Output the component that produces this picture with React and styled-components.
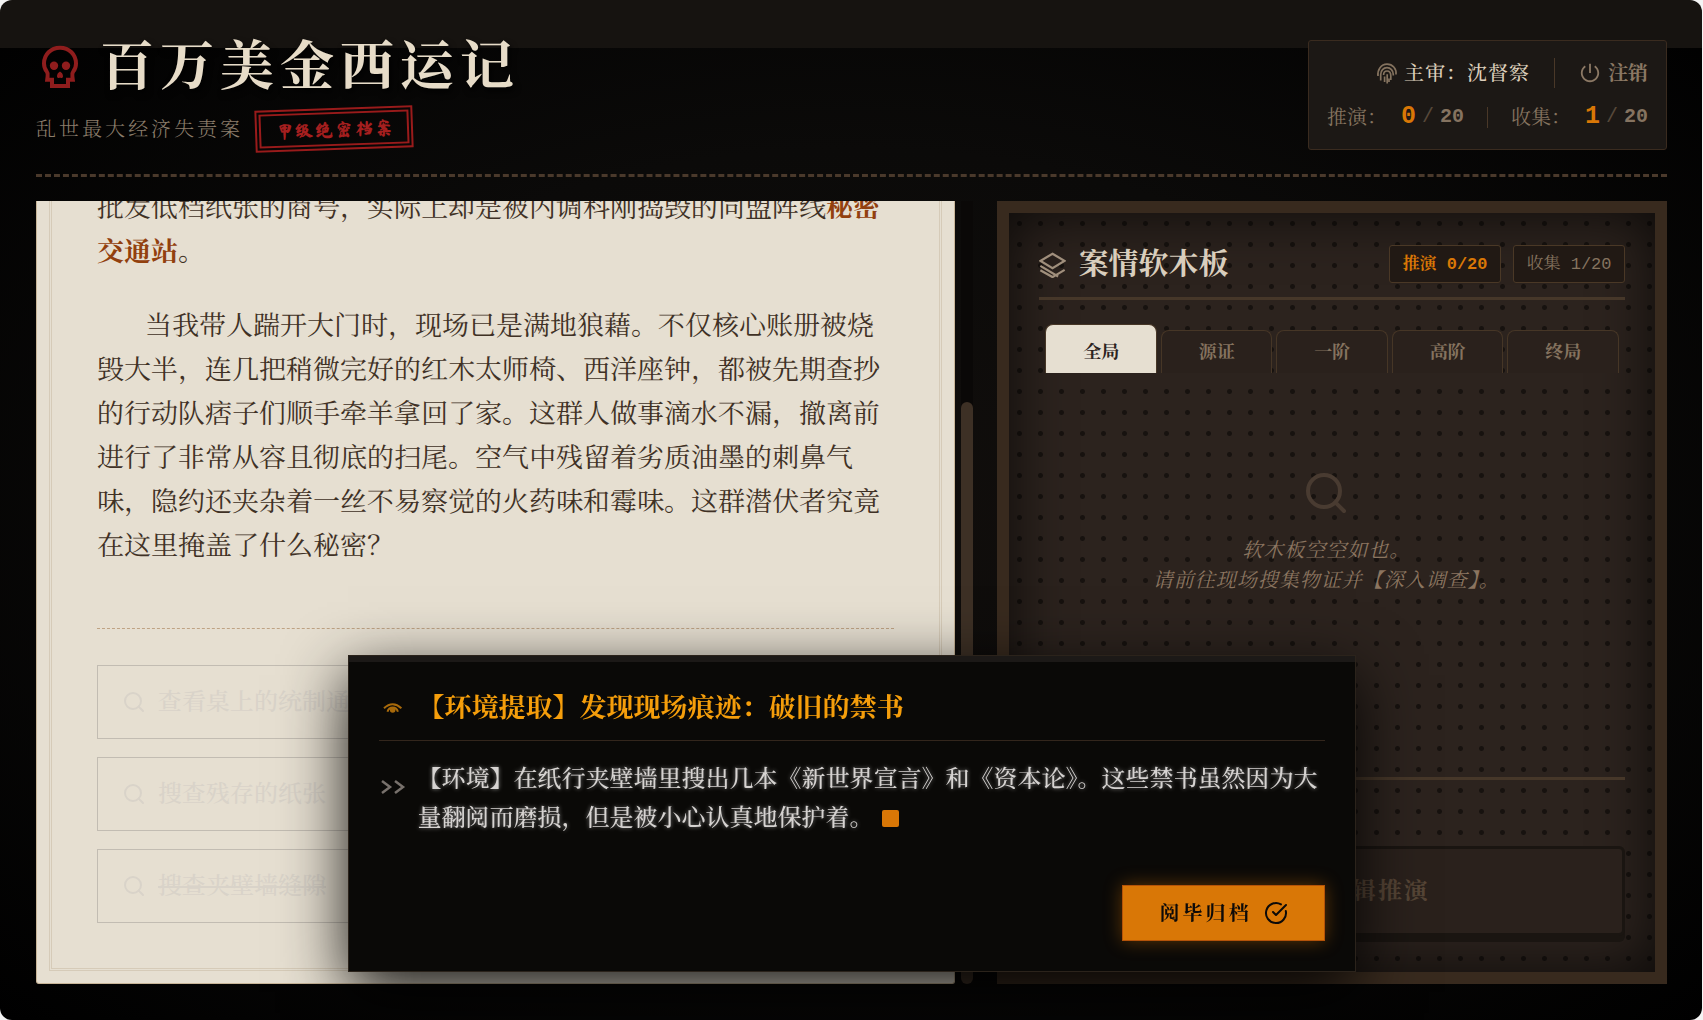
import React from "react";
import styled, { createGlobalStyle, css } from "styled-components";
import { RiShutDownLine } from "react-icons/ri";
import { Search, CircleCheckBig } from "lucide-react";

const serif = `"Liberation Serif", "Noto Serif SC", "Noto Serif CJK SC", "Source Han Serif SC", "Noto Sans CJK SC", serif`;
const mono = `Cousine, "Liberation Mono", "Noto Serif SC", "Noto Serif CJK SC", "Noto Sans CJK SC", monospace`;

const Global = createGlobalStyle`
  * { box-sizing: border-box; }
  html, body { margin: 0; background: #f4f4f4; }
  body { font-family: ${serif}; color: #e7dcc8; overflow: hidden; }
  h1, h2, h3, p { margin: 0; }
  button { font-family: inherit; line-height: 1; cursor: pointer; }
  svg { display: block; flex: none; }
`;

const Page = styled.div`
  position: relative;
  display: flex;
  flex-direction: column;
  height: 100vh;
  margin-right: 1px;
  padding: 36px 35px 36px 36px;
  border-radius: 12px;
  overflow: hidden;
  background:
    linear-gradient(#161310, #161310) 0 0 / 100% 48px no-repeat,
    radial-gradient(ellipse at center, #110e0c 0%, #0b0a09 50%, #000 100%);
`;

const Header = styled.header`
  display: flex;
  justify-content: space-between;
  align-items: flex-end;
  padding-bottom: 24px;
  border-bottom: 3px dashed #4a392b;
`;

const Brand = styled.div`
  display: flex;
  flex-direction: column;
  gap: 12px;
`;

const TitleRow = styled.div`
  display: flex;
  align-items: center;
  gap: 16px;
  height: 60px;
  color: #8f1d1d;
`;

const Title = styled.h1`
  padding-top: 2px;
  font-size: 54px;
  line-height: 60px;
  font-weight: 700;
  letter-spacing: 6px;
  color: #e7dcc8;
  text-shadow: 2px 4px 6px rgba(0, 0, 0, 0.8);
`;

const SubRow = styled.div`
  display: flex;
  align-items: center;
  gap: 12px;
  height: 42px;
`;

const Subtitle = styled.p`
  font-size: 20px;
  line-height: 24px;
  letter-spacing: 3px;
  font-weight: 300;
  color: #8b7d6b;
`;

const Stamp = styled.span`
  padding: 0 12px 0 14px;
  border: 6px double #991b1b;
  font-family: "Ma Shan Zheng", "KaiTi", "STKaiti", ${serif};
  font-size: 18px;
  line-height: 30px;
  letter-spacing: 2px;
  font-weight: 700;
  color: #a51f1f;
  transform: rotate(-2deg);
`;

const Status = styled.section`
  display: flex;
  flex-direction: column;
  align-items: flex-end;
  justify-content: center;
  gap: 14px;
  height: 110px;
  padding: 0 18px;
  background: #1c1815;
  border: 1px solid #3a2b1f;
  border-radius: 3px;
  font-size: 20px;
  line-height: 30px;
`;

const StatusRow = styled.div`
  display: flex;
  align-items: center;
  gap: ${(p) => p.$gap}px;
  color: #85735f;
`;

const Officer = styled.span`
  display: flex;
  align-items: center;
  gap: 6px;
  svg { color: #85735f; }
  span { color: #dccfbb; font-weight: 500; letter-spacing: 1px; }
`;

const Rule = styled.span`
  width: 1px;
  height: ${(p) => p.$h}px;
  background: #4a3828;
`;

const Logout = styled.button`
  display: flex;
  align-items: center;
  gap: 7px;
  padding: 0;
  border: 0;
  background: none;
  font-size: 20px;
  font-weight: 700;
  color: #8b7864;
`;

const Counter = styled.span`
  display: flex;
  align-items: center;
  gap: 6px;
`;

const CounterLabel = styled.span`
  margin-right: 8px;
`;

const Num = styled.span`
  font-family: ${mono};
  font-size: ${(p) => (p.$hot ? 25 : 20)}px;
  font-weight: ${(p) => (p.$dim ? 400 : 700)};
  color: ${(p) => (p.$hot ? "#d97706" : p.$dim ? "#57483a" : "#857360")};
`;

const Main = styled.main`
  flex: 1;
  min-height: 0;
  display: grid;
  grid-template-columns: 7fr 5fr;
  gap: 24px;
  padding-top: 24px;
`;

const Reader = styled.div`
  display: flex;
  gap: 6px;
  min-width: 0;
  min-height: 0;
`;

const Scrollbar = styled.div`
  width: 12px;
  padding-top: 201px;
  background: #0a0807;
  &::before {
    content: "";
    display: block;
    height: 100%;
    border-radius: 6px;
    background: #3d3025;
  }
`;

const Paper = styled.article`
  position: relative;
  flex: 1;
  min-width: 0;
  display: flex;
  flex-direction: column;
  justify-content: flex-end;
  overflow: hidden;
  padding: 0 60px 60px;
  background: #e6dfd1;
  border: 1px solid #c8b598;
  border-top: 0;
  border-radius: 0 0 3px 3px;
  &::before {
    content: "";
    position: absolute;
    inset: -12px 12px 12px;
    border: 3px double #d6cbb8;
    pointer-events: none;
  }
`;

const Para = styled.p`
  margin-bottom: 30px;
  font-size: 27px;
  line-height: 44px;
  font-weight: 400;
  color: #3f3125;
  text-indent: ${(p) => (p.$indent ? 48 : 0)}px;
  strong { color: #92400e; font-weight: 700; }
`;

const Actions = styled.div`
  display: flex;
  flex-direction: column;
  gap: 18px;
  margin-top: 30px;
  padding-top: 36px;
  border-top: 1px dashed #bfa384;
`;

const Action = styled.button`
  display: flex;
  align-items: center;
  gap: 12px;
  height: 74px;
  padding: 0 24px;
  border: 1px solid #c2bcb2;
  background: transparent;
  font-size: 24px;
  font-weight: 500;
  color: #d9d3c9;
  text-decoration: ${(p) => (p.$done ? "line-through" : "none")};
`;

const Board = styled.section`
  position: relative;
  display: flex;
  flex-direction: column;
  min-width: 0;
  padding: 30px;
  border: 12px solid #382a1e;
  background: radial-gradient(circle at center, #17120f 2px, transparent 3px) 0 0 / 21px 21px, #2c231e;
  box-shadow: inset 0 0 60px rgba(0, 0, 0, 0.75);
`;

const BoardHead = styled.div`
  display: flex;
  align-items: center;
  justify-content: space-between;
  padding-bottom: 12px;
  height: 57px;
  margin-bottom: 24px;
  border-bottom: 3px solid #463729;
`;

const BoardTitle = styled.h2`
  display: flex;
  align-items: center;
  gap: 12px;
  font-size: 30px;
  line-height: 38px;
  font-weight: 700;
  color: #d9cebd;
  svg { color: #a08f7c; }
`;

const Badges = styled.div`
  display: flex;
  gap: 12px;
`;

const Badge = styled.span`
  width: 112px;
  height: 38px;
  border: 1px solid #4a3826;
  border-radius: 3px;
  background: #211914;
  font-family: ${mono};
  font-size: 17px;
  line-height: 38px;
  text-align: center;
  white-space: nowrap;
  font-weight: ${(p) => (p.$hot ? 700 : 400)};
  color: ${(p) => (p.$hot ? "#d97706" : "#85735f")};
`;

const Tabs = styled.div`
  display: flex;
  align-items: flex-end;
  gap: 4px;
  height: 49px;
  padding: 0 6px;
`;

const Tab = styled.button`
  flex: 1;
  height: 43px;
  padding: 0;
  border: 1px solid #463626;
  border-bottom: 0;
  border-radius: 8px 8px 0 0;
  background: #2a211c;
  color: #85735f;
  font-size: 18px;
  font-weight: 700;
  ${(p) =>
    p.$active &&
    css`
      height: 49px;
      padding-top: 6px;
      background: #e6dfd1;
      color: #2c231e;
    `}
`;

const Empty = styled.div`
  flex: 1;
  display: flex;
  flex-direction: column;
  align-items: center;
  gap: 18px;
  padding: 96px 12px 0 0;
  font-size: 20px;
  line-height: 30px;
  letter-spacing: 1px;
  font-style: italic;
  text-align: center;
  color: #8b7560;
  svg { color: #493b31; }
`;

const BoardFoot = styled.div`
  padding: 66px 0 6px;
  border-top: 3px solid #463729;
`;

const Deduce = styled.button`
  display: flex;
  align-items: center;
  justify-content: center;
  gap: 12px;
  width: 100%;
  height: 90px;
  border: 3px solid #1a1511;
  border-radius: 6px;
  background: #2a211c;
  box-shadow: 0 6px 0 #1a1511;
  font-size: 24px;
  font-weight: 700;
  letter-spacing: 2px;
  color: #564536;
`;

const Dialog = styled.section`
  position: fixed;
  left: 50%;
  bottom: 48px;
  transform: translateX(-50%);
  display: flex;
  flex-direction: column;
  width: 1008px;
  max-width: calc(100% - 48px);
  min-height: 317px;
  padding: 30px;
  border: 1px solid #2b231b;
  background: #0a0907;
  box-shadow: 0 20px 60px rgba(0, 0, 0, 0.9);
  &::before {
    content: "";
    position: absolute;
    inset: 0 0 auto;
    height: 6px;
    background: #1c1917;
  }
`;

const DialogTitle = styled.h3`
  display: flex;
  align-items: center;
  gap: 12px;
  padding-bottom: 10px;
  border-bottom: 1px solid #33261c;
  font-size: 27px;
  line-height: 44px;
  font-weight: 700;
  color: #f59e0b;
`;

const DialogBody = styled.div`
  display: flex;
  gap: 12px;
  flex: 1;
  padding-top: 19px;
  font-size: 24px;
  line-height: 39px;
  font-weight: 500;
  color: #d6d3d1;
  text-shadow: 0 0 4px rgba(255, 255, 255, 0.5);
  svg { margin-top: 18px; color: #78716c; }
`;

const Caret = styled.span`
  display: inline-block;
  width: 17px;
  height: 17px;
  margin-left: 8px;
  vertical-align: -1px;
  border-radius: 2px;
  background: #d97706;
`;

const Archive = styled.button`
  align-self: flex-end;
  display: flex;
  align-items: center;
  gap: 12px;
  height: 56px;
  padding: 0 36px 0 37px;
  border: 1px solid #b45309;
  background: #d97706;
  box-shadow: 0 0 18px rgba(217, 119, 6, 0.4);
  font-size: 20px;
  font-weight: 700;
  letter-spacing: 3px;
  color: #0c0a09;
`;

const SkullIcon = () => (
  <svg width="48" height="48" viewBox="0 0 48 48" fill="none" stroke="currentColor" strokeWidth="4" aria-hidden="true">
    <path d="M24 5.700C14.800 5.700 8 12.600 8 21.500c0 3 .8 5.600 2.600 7.800 1.200 1.500 1.400 3 1 5.200l-.4 3.200H16V44h16v-6.300h4.800l-.4-3.200c-.4-2.200-.2-3.700 1-5.200 1.800-2.200 2.600-4.800 2.600-7.800C40 12.600 33.200 5.700 24 5.700z" />
    <circle cx="18" cy="23.700" r="4.200" fill="currentColor" stroke="none" />
    <circle cx="30" cy="23.700" r="4.200" fill="currentColor" stroke="none" />
    <path d="M24 29.600c1.800 1 3.200 3 3 4.800-.2 1.500-1.600 1.800-3 1.400-1.400.4-2.800.1-3-1.400-.2-1.800 1.200-3.800 3-4.800z" fill="currentColor" stroke="none" />
  </svg>
);

const PrintIcon = () => (
  <svg width="22" height="22" viewBox="0 0 22 22" fill="none" stroke="currentColor" strokeWidth="1.700" aria-hidden="true">
    <path d="M2 14C1.200 7.500 5.200 2.200 11 2.200S20.800 7 20 12.500" />
    <path d="M4.700 18.500v-6c0-4 2.800-6.800 6.300-6.800s6.300 2.800 6.300 6.800v1" />
    <path d="M7.600 13c0-2.500 1.400-4 3.400-4s3.800 1.500 3.800 5v4" />
    <path d="M8.600 14.500v5.500M11.200 12.200v9.300M13 16.500v3.500" />
  </svg>
);

const StackIcon = () => (
  <svg width="27" height="27" viewBox="0 0 24 24" fill="none" stroke="currentColor" strokeWidth="2" aria-hidden="true">
    <path d="M12 2.400 22.600 8.800 12 15.200 1.400 8.800z" />
    <path d="M1.200 13.200 17 22.600M1.200 17.200 12 23.200 22.800 16.800" />
  </svg>
);

const EyeIcon = () => (
  <svg width="27" height="27" viewBox="0 0 27 27" fill="none" stroke="#a86a0b" strokeWidth="2" aria-hidden="true">
    <path d="M5 13.200C8 10.400 11 9.200 13.700 9.200s5.700 1.200 8.700 4" />
    <path d="M8.500 16.800c.8-3 2.700-4.300 5.200-4.300s4.400 1.300 5.200 4.300" />
    <circle cx="13.700" cy="15" r="1.800" fill="#a86a0b" />
  </svg>
);

const PromptIcon = () => (
  <svg width="27" height="18" viewBox="0 0 27 18" fill="none" stroke="currentColor" strokeWidth="2.500" aria-hidden="true">
    <path d="M3 3l8 6-8 6M16 3l8 6-8 6" />
  </svg>
);

const Count = ({ label, value }) => (
  <Counter>
    <CounterLabel>{label}</CounterLabel>
    <Num $hot>{value}</Num>
    <Num $dim>/</Num>
    <Num>20</Num>
  </Counter>
);

const tabs = ["全局", "源证", "一阶", "高阶", "终局"];
const actions = [
  { text: "查看桌上的统制通告" },
  { text: "搜查残存的纸张" },
  { text: "搜查夹壁墙缝隙", done: true },
];

export default function App() {
  return (
    <>
      <Global />
      <Page>
        <Header>
          <Brand>
            <TitleRow>
              <SkullIcon />
              <Title>百万美金西运记</Title>
            </TitleRow>
            <SubRow>
              <Subtitle>乱世最大经济失责案</Subtitle>
              <Stamp>甲级绝密档案</Stamp>
            </SubRow>
          </Brand>
          <Status>
            <StatusRow $gap={24}>
              <Officer>
                <PrintIcon />
                <span>主审：沈督察</span>
              </Officer>
              <Rule $h={30} />
              <Logout type="button">
                <RiShutDownLine size={22} />
                注销
              </Logout>
            </StatusRow>
            <StatusRow $gap={23}>
              <Count label="推演：" value="0" />
              <Rule $h={21} />
              <Count label="收集：" value="1" />
            </StatusRow>
          </Status>
        </Header>

        <Main>
          <Reader>
            <Paper>
              <Para>
                批发低档纸张的商号，实际上却是被内调科刚捣毁的同盟阵线<strong>秘密交通站</strong>。
              </Para>
              <Para $indent>
                当我带人踹开大门时，现场已是满地狼藉。不仅核心账册被烧毁大半，连几把稍微完好的红木太师椅、西洋座钟，都被先期查抄的行动队痞子们顺手牵羊拿回了家。这群人做事滴水不漏，撤离前进行了非常从容且彻底的扫尾。空气中残留着劣质油墨的刺鼻气味，隐约还夹杂着一丝不易察觉的火药味和霉味。这群潜伏者究竟在这里掩盖了什么秘密？
              </Para>
              <Actions>
                {actions.map((a) => (
                  <Action key={a.text} type="button" $done={a.done}>
                    <Search size={24} strokeWidth={2} />
                    <span>{a.text}</span>
                  </Action>
                ))}
              </Actions>
            </Paper>
            <Scrollbar />
          </Reader>

          <Board>
            <BoardHead>
              <BoardTitle>
                <StackIcon />
                案情软木板
              </BoardTitle>
              <Badges>
                <Badge $hot>推演 0/20</Badge>
                <Badge>收集 1/20</Badge>
              </Badges>
            </BoardHead>
            <Tabs>
              {tabs.map((t, i) => (
                <Tab key={t} type="button" $active={i === 0}>
                  {t}
                </Tab>
              ))}
            </Tabs>
            <Empty>
              <Search size={48} strokeWidth={2} />
              <p>
                软木板空空如也。
                <br />
                请前往现场搜集物证并【深入调查】。
              </p>
            </Empty>
            <BoardFoot>
              <Deduce type="button">
                <Search size={27} />
                进行逻辑推演
              </Deduce>
            </BoardFoot>
          </Board>
        </Main>
      </Page>

      <Dialog role="dialog" aria-labelledby="find-title">
        <DialogTitle id="find-title">
          <EyeIcon />
          【环境提取】发现现场痕迹：破旧的禁书
        </DialogTitle>
        <DialogBody>
          <PromptIcon />
          <p>
            【环境】在纸行夹壁墙里搜出几本《新世界宣言》和《资本论》。这些禁书虽然因为大量翻阅而磨损，但是被小心认真地保护着。
            <Caret />
          </p>
        </DialogBody>
        <Archive type="button">
          阅毕归档
          <CircleCheckBig size={24} strokeWidth={2} />
        </Archive>
      </Dialog>
    </>
  );
}
